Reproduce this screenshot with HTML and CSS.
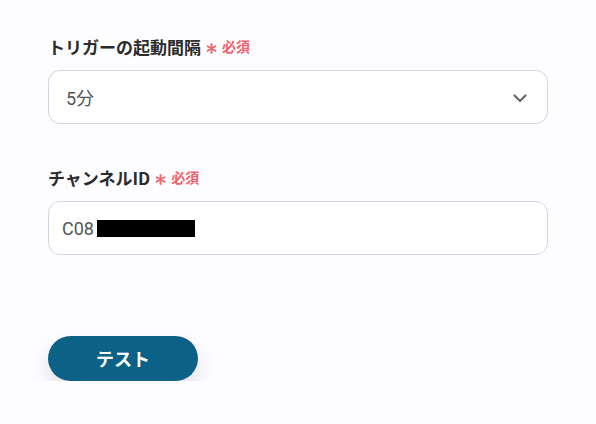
FILE: index.html
```html
<!DOCTYPE html>
<html lang="ja">
<head>
  <meta charset="UTF-8" />
  <title>トリガー設定</title>
  <link rel="stylesheet" href="styles.css">
</head>
<body>
  <div class="form-wrapper">
    <div class="field">
      <label class="field-label">トリガーの起動間隔<span class="req"><svg class="star" width="11" height="11" viewBox="0 0 12 12"><path d="M6 1 V11 M1.7 3.5 L10.3 8.5 M1.7 8.5 L10.3 3.5" stroke="#f0636b" stroke-width="2" stroke-linecap="round"/></svg>必須</span></label>
      <div class="select-box">
        <span>5分</span>
        <svg class="chevron" width="16" height="16" viewBox="0 0 16 16"><path d="M2.5 5.5 L8 11 L13.5 5.5" fill="none" stroke="#666" stroke-width="2.2" stroke-linecap="round" stroke-linejoin="round"/></svg>
      </div>
    </div>
    <div class="field">
      <label class="field-label">チャンネルID<span class="req"><svg class="star" width="11" height="11" viewBox="0 0 12 12"><path d="M6 1 V11 M1.7 3.5 L10.3 8.5 M1.7 8.5 L10.3 3.5" stroke="#f0636b" stroke-width="2" stroke-linecap="round"/></svg>必須</span></label>
      <div class="text-box">
        <span>C08</span><span class="redact"></span>
      </div>
    </div>
    <div class="actions">
      <button class="test-btn">テスト</button>
    </div>
  </div>
</body>
</html>
```

FILE: styles.css
```css
body {
  margin: 0;
  background: #fdfcfe;
  font-family: "Noto Sans CJK JP", "Noto Sans", sans-serif;
  color: #333;
}
.form-wrapper {
  padding: 33px 48px 0 48px;
  width: 500px;
}
.field {
  margin-bottom: 40px;
}
.field + .field {
  margin-bottom: 81px;
}
.field-label {
  display: flex;
  align-items: center;
  font-size: 17px;
  font-weight: 700;
  color: #2b2b2b;
  height: 26px;
  margin-bottom: 11px;
}
.req {
  display: flex;
  align-items: center;
  color: #f0636b;
  font-size: 14px;
  font-weight: 700;
  margin-left: 5px;
}
.star {
  margin-right: 5px;
  margin-top: 4px;
}
.select-box,
.text-box {
  height: 52px;
  border: 1px solid #d4d6e2;
  border-radius: 12px;
  background: #fff;
  display: flex;
  align-items: center;
  padding: 0 19px 0 13px;
  box-sizing: content-box;
  font-family: Roboto, "Noto Sans CJK JP", sans-serif;
  font-size: 18px;
  color: #555;
}
.select-box {
  justify-content: space-between;
  padding-left: 17px;
}
.chevron {
  margin-top: 1px;
}
.redact {
  display: inline-block;
  width: 98px;
  height: 17px;
  background: #000;
  margin-top: 1px;
  margin-left: 3px;
}
.test-btn {
  width: 150px;
  height: 45px;
  border: none;
  border-radius: 23px;
  background: #0b6286;
  color: #fff;
  font-family: "Noto Sans CJK JP", sans-serif;
  font-size: 18px;
  font-weight: 700;
  padding-bottom: 3px;
  box-shadow: 0 10px 20px rgba(40, 40, 90, 0.13);
  cursor: pointer;
}
```
